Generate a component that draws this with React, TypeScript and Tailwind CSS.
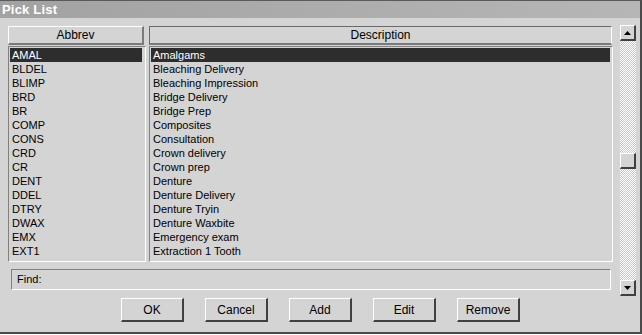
import React from "react";

const abbrevs = ["AMAL","BLDEL","BLIMP","BRD","BR","COMP","CONS","CRD","CR","DENT","DDEL","DTRY","DWAX","EMX","EXT1"];
const descs = ["Amalgams","Bleaching Delivery","Bleaching Impression","Bridge Delivery","Bridge Prep","Composites","Consultation","Crown delivery","Crown prep","Denture","Denture Delivery","Denture Tryin","Denture Waxbite","Emergency exam","Extraction 1 Tooth"];
const buttons = ["OK","Cancel","Add","Edit","Remove"];

function Btn({ label }: { label: string }) {
  return (
    <div className="w-[63px] h-[24px] border-t border-l border-t-white border-l-white border-r-2 border-b-2 border-r-[#404040] border-b-[#404040] bg-[#d4d4d4] flex items-center justify-center text-[12px] text-black">
      {label}
    </div>
  );
}

export default function App() {
  return (
    <div className="w-[642px] h-[335px] bg-white overflow-hidden" style={{ fontFamily: '"Liberation Sans", Arial, sans-serif' }}>
      <div className="w-[642px] h-[334px] bg-[#d4d4d4] border-t border-t-[#5a5a5a] border-r-2 border-r-[#4a4a4a] border-b-2 border-b-[#4a4a4a] flex flex-col">
        <div className="h-[17px] bg-[linear-gradient(90deg,#a2a2a2,#b6b6b6)] flex items-center pl-[2px] text-white font-bold text-[13px] leading-none tracking-[0.2px]">
          Pick List
        </div>
        <div className="flex flex-row flex-1">
          <div className="flex flex-col pl-[8px] pt-[8px] w-[614px]">
            <div className="flex h-[19px] text-[12px] text-black">
              <div className="w-[136px] border-t border-l border-t-white border-l-white border-r-2 border-b-2 border-r-[#7a7a7a] border-b-[#7a7a7a] flex items-center justify-center">Abbrev</div>
              <div className="ml-[5px] w-[463px] border-t border-l border-t-[#6a6a6a] border-l-[#6a6a6a] border-r border-r-white border-b-2 border-b-[#7a7a7a] flex items-center justify-center">Description</div>
            </div>
            <div className="flex mt-[1px] h-[216px] text-[11px] text-black leading-[14px]">
              <div className="w-[138px] border-t border-l border-t-[#808080] border-l-[#808080] border-r border-b border-r-white border-b-white pl-[1px] pt-[1px]">
                {abbrevs.map((a, i) => (
                  <div key={a} className={`h-[14px] pl-[2px] w-[132px] ${i === 0 ? "bg-[#2d2d2d] text-white" : ""}`}>{a}</div>
                ))}
              </div>
              <div className="ml-[3px] w-[464px] border-t border-l border-t-[#808080] border-l-[#808080] border-r border-b border-r-white border-b-white pl-[1px] pt-[1px]">
                {descs.map((d, i) => (
                  <div key={d} className={`h-[14px] pl-[2px] w-[459px] ${i === 0 ? "bg-[#2d2d2d] text-white" : ""}`}>{d}</div>
                ))}
              </div>
            </div>
            <div className="ml-[3px] mt-[7px] w-[600px] h-[21px] border-t border-l border-t-[#808080] border-l-[#808080] border-r border-b border-r-white border-b-white flex items-center pl-[5px] text-[11px] text-black">
              Find:
            </div>
            <div className="flex gap-[21px] ml-[113px] mt-[8px]">
              {buttons.map((b) => <Btn key={b} label={b} />)}
            </div>
          </div>
          <div className="flex flex-col pt-[7px] ml-[6px] w-[16px]">
            <div className="w-[16px] h-[16px] bg-[#d4d4d4] border-t border-l border-t-white border-l-white border-r-2 border-b-2 border-r-[#404040] border-b-[#404040] flex items-center justify-center">
              <svg width="7" height="4" viewBox="0 0 7 4"><path d="M3.5 0 L7 4 L0 4 Z" fill="#000" /></svg>
            </div>
            <div className="w-[16px] h-[239px] bg-[image:repeating-conic-gradient(#ffffff_0%_25%,#c8c8c8_0%_50%)] bg-[length:2px_2px] flex flex-col">
              <div className="h-[112px]" />
              <div className="w-[16px] h-[16px] bg-[#d4d4d4] border-t border-l border-t-white border-l-white border-r-2 border-b-2 border-r-[#404040] border-b-[#404040]" />
            </div>
            <div className="w-[16px] h-[16px] bg-[#d4d4d4] border-t border-l border-t-white border-l-white border-r-2 border-b-2 border-r-[#404040] border-b-[#404040] flex items-center justify-center">
              <svg width="7" height="4" viewBox="0 0 7 4"><path d="M0 0 L7 0 L3.5 4 Z" fill="#000" /></svg>
            </div>
          </div>
        </div>
      </div>
    </div>
  );
}
